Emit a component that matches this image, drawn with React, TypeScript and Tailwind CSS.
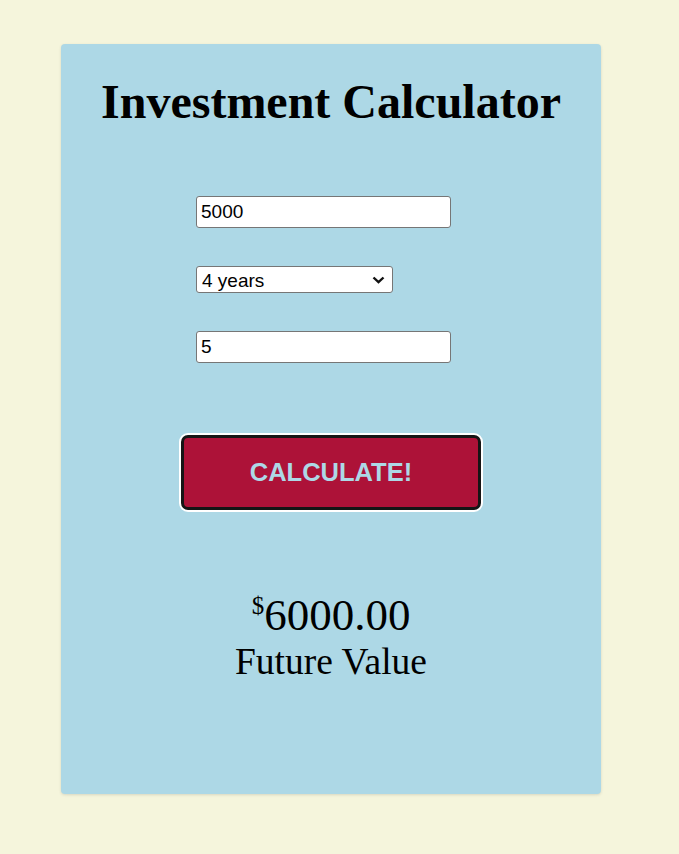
import { useState } from "react";

const App = () => {
  const [amount, setAmount] = useState("5000");
  const [years, setYears] = useState("4");
  const [rate, setRate] = useState("5");

  return (
    <div className="min-h-[854px] w-full bg-[#f5f5dc] pt-[44px] pl-[61px]">
      <div className="w-[540px] h-[750px] bg-[#add8e6] rounded-[4px] shadow-[0_1px_3px_rgba(0,0,0,0.12)] flex flex-col font-['Liberation_Serif',serif]">
        <h1 className="mt-[34px] text-center text-[48px] font-bold leading-none text-black">
          Investment Calculator
        </h1>

        <form className="mt-[70px] pl-[135px] flex flex-col font-['Liberation_Sans',Arial,sans-serif]">
          <input
            type="text"
            value={amount}
            onChange={(e) => setAmount(e.target.value)}
            className="w-[255px] h-[32px] bg-white border border-[#767676] rounded-[3px] px-[4px] text-[19px] text-black outline-none"
          />
          <div className="mt-[38px] relative w-[197px] h-[27px]">
            <select
              value={years}
              onChange={(e) => setYears(e.target.value)}
              className="w-full h-full bg-white border border-[#767676] rounded-[3px] pl-[5px] pr-[3px] text-[19px] text-black outline-none appearance-none"
            >
              <option value="1">1 year</option>
              <option value="2">2 years</option>
              <option value="3">3 years</option>
              <option value="4">4 years</option>
              <option value="5">5 years</option>
            </select>
            <svg
              className="absolute right-[8px] top-[10px] pointer-events-none"
              width="13"
              height="8"
              viewBox="0 0 13 8"
            >
              <path d="M1.5 1.5 L6.5 6.2 L11.5 1.5" fill="none" stroke="#111" strokeWidth="2.4" />
            </svg>
          </div>
          <input
            type="text"
            value={rate}
            onChange={(e) => setRate(e.target.value)}
            className="mt-[38px] w-[255px] h-[32px] bg-white border border-[#767676] rounded-[3px] px-[4px] text-[19px] text-black outline-none"
          />
        </form>

        <div className="mt-[72px] flex justify-center">
          <button
            type="button"
            className="w-[300px] h-[75px] bg-[#ad1238] border-[3px] border-[#151515] rounded-[7px] ring-2 ring-white text-[#add8e6] text-[25.5px] font-bold font-['Liberation_Sans',Arial,sans-serif]"
          >
            CALCULATE!
          </button>
        </div>

        <div className="mt-[83px] flex flex-col items-center text-black">
          <div className="text-[45px] leading-none">
            <sup className="text-[25px] align-top relative top-[13px]">$</sup>6000.00
          </div>
          <div className="text-[37.5px] leading-none mt-[5px]">Future Value</div>
        </div>
      </div>
    </div>
  );
};

export default App;
